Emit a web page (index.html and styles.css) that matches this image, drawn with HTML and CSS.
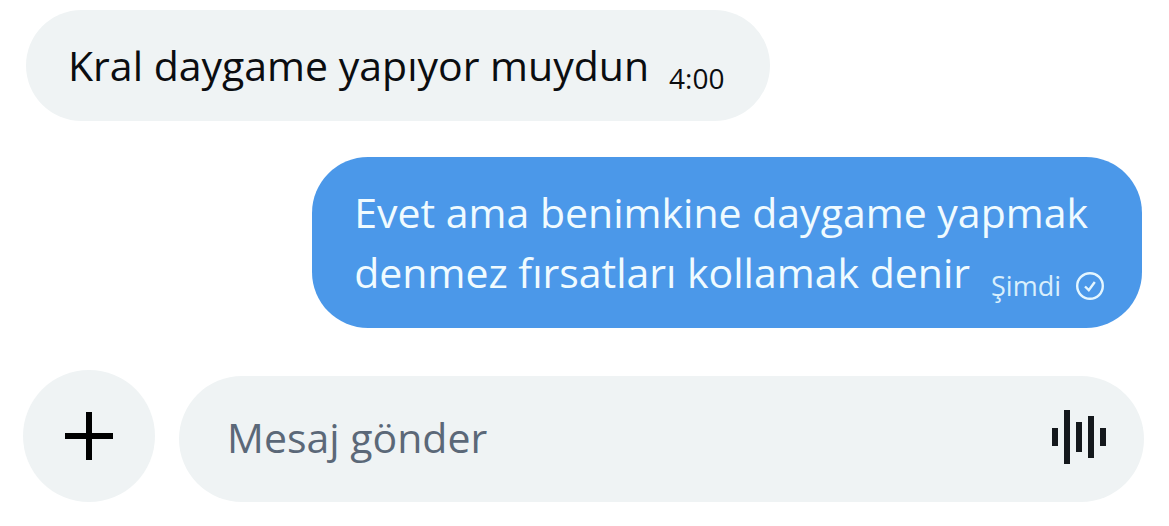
FILE: index.html
```html
<!DOCTYPE html>
<html lang="tr">
<head>
<meta charset="utf-8">
<meta name="viewport" content="width=device-width, initial-scale=1">
<title>Mesajlar</title>
<link rel="stylesheet" href="styles.css">
</head>
<body>
<main class="chat">
  <article class="bubble incoming">
    <p class="text">Kral daygame yapıyor muydun</p>
    <time class="meta">4:00</time>
  </article>
  <article class="bubble outgoing">
    <p class="text">Evet ama benimkine daygame yapmak<br>denmez fırsatları kollamak denir</p>
    <span class="meta">Şimdi
      <svg class="check" viewBox="0 0 28 28" aria-hidden="true"><circle cx="14" cy="14" r="12.8"/><path d="M9 14.5l3.8 3.7 6-8.2"/></svg>
    </span>
  </article>
  <form class="composer">
    <button class="add" type="button" aria-label="Ekle">
      <svg viewBox="0 0 48 48" aria-hidden="true"><path d="M24 0v48M0 24h48"/></svg>
    </button>
    <div class="field">
      <input class="input" type="text" placeholder="Mesaj gönder" aria-label="Mesaj gönder">
      <button class="voice" type="button" aria-label="Sesli mesaj">
        <svg viewBox="0 0 54 54" aria-hidden="true"><path d="M3 18v18M15 0v54M27 12v30M39 6v42M51 18v18"/></svg>
      </button>
    </div>
  </form>
</main>
</body>
</html>
```
FILE: styles.css
```css
* { box-sizing: border-box; }
body { margin: 0; background: #fff; color: #0b0d10; font-family: "Open Sans", "Noto Sans", sans-serif; }
.chat { display: flex; flex-direction: column; padding: 10px 25px 24px 23px; }
.bubble { display: flex; align-items: flex-end; border-radius: 56px; }
.text { margin: 0; font-size: 41px; line-height: 60px; white-space: nowrap; }
.incoming { align-self: flex-start; margin-left: 3px; padding: 25px 45px 26px 42px; gap: 20px; background: #eff3f4; }
.incoming .meta { font-size: 28px; line-height: 34px; }
.outgoing { position: relative; align-self: flex-end; margin: 36px 2px 0 0; padding: 25px 54px 26px 42px; background: #4b98e9; color: #f0fbff; }
.outgoing .meta { position: absolute; right: 38px; bottom: 24px; display: flex; align-items: center; gap: 15px; font-size: 27px; line-height: 36px; color: #d9effc; }
.check { width: 28px; height: 28px; fill: none; stroke: #e4f6ff; stroke-width: 2.4; }
.composer { display: flex; align-items: flex-end; gap: 24px; margin-top: 42px; }
button { display: grid; place-items: center; padding: 0; border: 0; background: none; color: inherit; }
.add { flex: none; width: 132px; height: 132px; border-radius: 50%; background: #eff3f4; }
.add svg { width: 48px; height: 48px; fill: none; stroke: #000; stroke-width: 6; }
.field { display: flex; flex: 1; align-items: center; height: 126px; padding: 0 38px 4px 48px; border-radius: 63px; background: #eff3f4; }
.input { flex: 1; min-width: 0; padding: 0; border: 0; outline: 0; background: none; color: #0b0d10; font: 41px/60px "Open Sans", "Noto Sans", sans-serif; }
.input::placeholder { color: #5b6878; opacity: 1; }
.voice svg { width: 54px; height: 54px; fill: none; stroke: #14181c; stroke-width: 6; }
```
